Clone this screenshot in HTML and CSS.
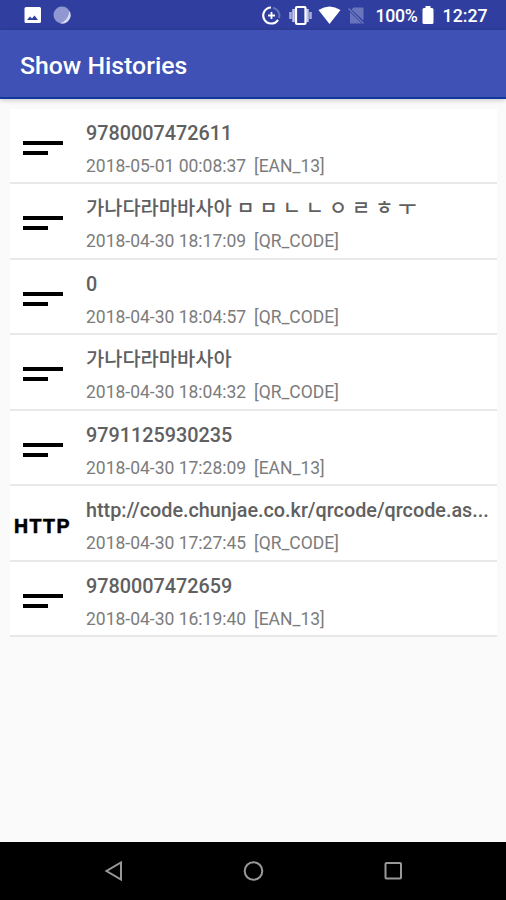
FILE: index.html
```html
<!DOCTYPE html>
<html lang="ko">
<head>
    <meta charset="UTF-8">
    <meta name="viewport" content="width=device-width, initial-scale=1.0">
    <title>Show Histories</title>
    <link rel="stylesheet" href="styles.css">
</head>
<body>
    <div class="status-bar">
        <svg class="status-icons-left" width="80" height="30" viewBox="0 0 80 30">
            <path fill="#fff" fill-rule="evenodd" d="M26 7h13.500q1.500 0 1.500 1.500v13q0 1.500-1.500 1.500H26q-1.500 0-1.500-1.500v-13Q24.500 7 26 7zM27 20h11l-3.500-4.500-2.500 3-2-2z"/>
            <circle cx="62" cy="15" r="8.500" fill="#8f98d0"/>
            <path fill="#d9ddf3" d="M69.500 11A8.500 8.500 0 0 1 60 23.300Q68 21 69.500 11z"/>
        </svg>
        <svg class="status-icons-right" width="110" height="30" viewBox="260 0 110 30">
            <path fill="none" stroke="#6572bb" stroke-width="2" d="M273 7.700A8 8 0 0 1 279 18"/>
            <path fill="none" stroke="#fff" stroke-width="2.200" d="M271 7.500A8 8 0 1 0 278 19.800"/>
            <path fill="none" stroke="#fff" stroke-width="1.800" d="M268 15.500h7M271.500 12v7"/>
            <path fill="none" stroke="#aab1dc" stroke-width="2.500" d="M290.500 12v7M310.500 12v7"/>
            <path fill="none" stroke="#c3c8e8" stroke-width="2.500" d="M293.500 9v13M307.500 9v13"/>
            <rect x="296" y="7" width="9.500" height="17" rx="1" fill="none" stroke="#fff" stroke-width="2.200"/>
            <path fill="#fff" d="M318.500 10Q329.500 3 340.500 10L329.500 24z"/>
            <path fill="#6874bc" d="M353.500 7.500H363.500V20.500L351.500 9.500zM350 12l11.500 11.500H350z"/>
            <path stroke="#6874bc" stroke-width="1.500" d="M348.500 8.500l15 15"/>
        </svg>
        <span class="battery-level">100%</span>
        <svg class="battery" width="12" height="20" viewBox="0 0 12 20">
            <path fill="#fff" d="M3.500 1h5v2H10q1.500 0 1.500 1.500v13Q11.500 19 10 19H2Q.5 19 .5 17.500v-13Q.5 3 2 3h1.500z"/>
        </svg>
        <span class="clock">12:27</span>
    </div>
    <header class="app-bar">
        <h1>Show Histories</h1>
    </header>

    <main class="history-list">
        <div class="history-item">
            <div class="item-icon"><span class="text-lines"></span></div>
            <div class="item-body">
                <div class="item-title">9780007472611</div>
                <div class="item-info"><span class="item-date">2018-05-01 00:08:37</span><span>[EAN_13]</span></div>
            </div>
        </div>
        <div class="history-item">
            <div class="item-icon"><span class="text-lines"></span></div>
            <div class="item-body">
                <div class="item-title">가나다라마바사아 ㅁ ㅁ ㄴ ㄴ ㅇ ㄹ ㅎ ㅜ</div>
                <div class="item-info"><span class="item-date">2018-04-30 18:17:09</span><span>[QR_CODE]</span></div>
            </div>
        </div>
        <div class="history-item">
            <div class="item-icon"><span class="text-lines"></span></div>
            <div class="item-body">
                <div class="item-title">0</div>
                <div class="item-info"><span class="item-date">2018-04-30 18:04:57</span><span>[QR_CODE]</span></div>
            </div>
        </div>
        <div class="history-item">
            <div class="item-icon"><span class="text-lines"></span></div>
            <div class="item-body">
                <div class="item-title">가나다라마바사아</div>
                <div class="item-info"><span class="item-date">2018-04-30 18:04:32</span><span>[QR_CODE]</span></div>
            </div>
        </div>
        <div class="history-item">
            <div class="item-icon"><span class="text-lines"></span></div>
            <div class="item-body">
                <div class="item-title">9791125930235</div>
                <div class="item-info"><span class="item-date">2018-04-30 17:28:09</span><span>[EAN_13]</span></div>
            </div>
        </div>
        <div class="history-item">
            <div class="item-icon http">HTTP</div>
            <div class="item-body">
                <div class="item-title">http://code.chunjae.co.kr/qrcode/qrcode.as...</div>
                <div class="item-info"><span class="item-date">2018-04-30 17:27:45</span><span>[QR_CODE]</span></div>
            </div>
        </div>
        <div class="history-item">
            <div class="item-icon"><span class="text-lines"></span></div>
            <div class="item-body">
                <div class="item-title">9780007472659</div>
                <div class="item-info"><span class="item-date">2018-04-30 16:19:40</span><span>[EAN_13]</span></div>
            </div>
        </div>
    </main>

    <nav class="nav-bar">
        <svg width="24" height="24" viewBox="0 0 24 24"><path d="M20 3.500v17L5.500 12z"/></svg>
        <svg width="24" height="24" viewBox="0 0 24 24"><circle cx="12.500" cy="12" r="8.800"/></svg>
        <svg width="24" height="24" viewBox="0 0 24 24"><rect x="4.500" y="4" width="15.500" height="15.500" rx="1"/></svg>
    </nav>
</body>
</html>
```

FILE: styles.css
```css
* {
    box-sizing: border-box;
}
body {
    margin: 0;
    height: 900px;
    display: flex;
    flex-direction: column;
    overflow: hidden;
    background: #fafafa;
    font-family: Roboto, "Noto Sans CJK KR", sans-serif;
}
.status-bar {
    height: 30px;
    flex: none;
    display: flex;
    align-items: center;
    padding-right: 18.500px;
    background: #303f9f;
    color: #fff;
    font-size: 17.700px;
    font-weight: 500;
    line-height: 30px;
    white-space: nowrap;
}
.status-icons-right {
    margin-left: 180px;
}
.battery-level {
    width: 47px;
    padding: 2px 0 0 5.500px;
    letter-spacing: -0.300px;
}
.battery {
    margin-left: 5px;
}
.clock {
    margin-left: auto;
    padding-top: 2px;
}
.app-bar {
    height: 69px;
    flex: none;
    padding-left: 20px;
    background: #3f51b5;
    border-bottom: 2px solid #1238a0;
    box-shadow: 0 1px 5px rgba(0, 0, 0, 0.22);
    color: #fff;
}
.app-bar h1 {
    margin: 0;
    font-size: 24.800px;
    font-weight: 500;
    line-height: 71px;
}
.history-list {
    flex: 1;
    padding: 9.500px 9px 0 10px;
}
.history-item {
    height: 75.500px;
    display: flex;
    background: #fff;
    border-bottom: 2px solid #e8e8e8;
}
.item-icon {
    width: 76px;
    flex: none;
    padding: 32px 0 0 12.500px;
}
.text-lines {
    display: block;
    width: 40px;
    height: 15px;
    border-top: 4px solid #000;
}
.text-lines::after {
    content: "";
    display: block;
    width: 25px;
    height: 4px;
    margin-top: 6px;
    background: #000;
}
.item-icon.http {
    padding: 28px 0 0 4px;
    color: #000;
    font-family: "Liberation Sans", sans-serif;
    font-size: 19.500px;
    font-weight: 700;
    line-height: 25px;
    letter-spacing: 1.500px;
    -webkit-text-stroke: 0.600px #000;
}
.item-body {
    min-width: 0;
    padding-top: 11px;
    white-space: nowrap;
}
.item-title {
    height: 28px;
    color: #606060;
    font-size: 19.800px;
    font-weight: 500;
    line-height: 28px;
}
.item-info {
    display: flex;
    margin-top: 6px;
    color: #7c7c7c;
    font-size: 17.500px;
    line-height: 24px;
}
.item-date {
    width: 168px;
}
.nav-bar {
    height: 58px;
    flex: none;
    display: flex;
    justify-content: center;
    gap: 116px;
    padding-top: 17px;
    background: #000;
}
.nav-bar svg {
    fill: none;
    stroke: #999;
    stroke-width: 2;
}
```
